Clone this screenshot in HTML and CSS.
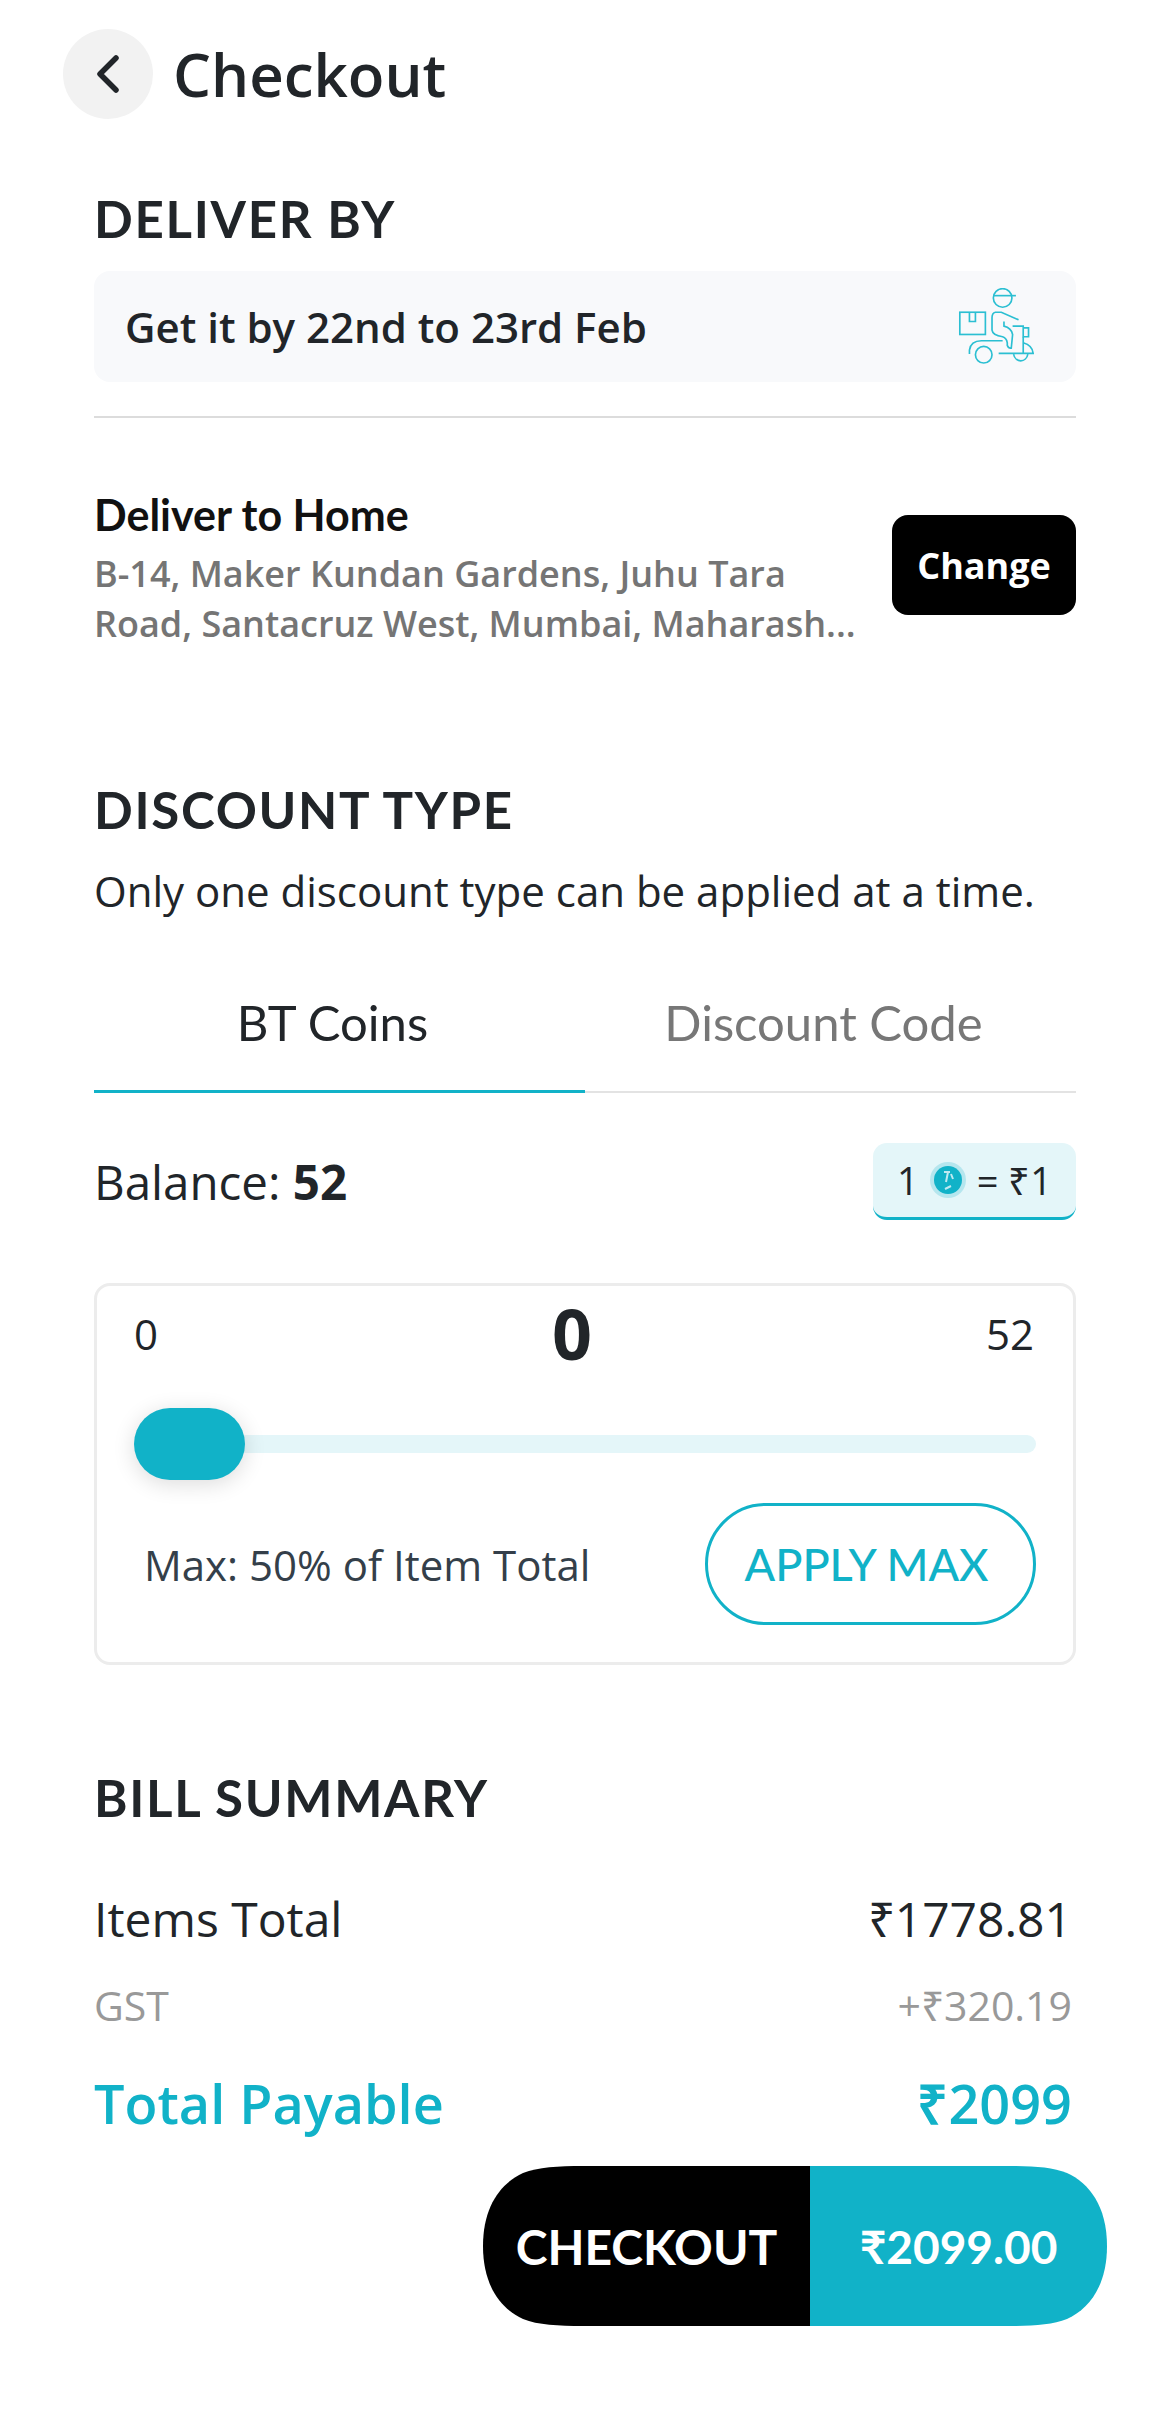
FILE: index.html
```html
<!DOCTYPE html>
<html lang="en">
<head>
    <meta charset="UTF-8">
    <meta name="viewport" content="width=device-width, initial-scale=1.0">
    <title>Checkout</title>
    <link rel="stylesheet" href="styles.css">
</head>
<body>
    <div class="page">
        <div class="header">
            <div class="back">
                <svg width="22" height="38" viewBox="0 0 22 38"><path d="M19 3 L3 19 L19 35" fill="none" stroke="#212529" stroke-width="5.5" stroke-linecap="round" stroke-linejoin="round"/></svg>
            </div>
            <h1>Checkout</h1>
        </div>

        <h2 class="section-title first">DELIVER BY</h2>
        <div class="deliver-box">
            <span>Get it by 22nd to 23rd Feb</span>
            <svg class="scooter" width="80" height="78" viewBox="170 85 240 235" fill="none" stroke="#2bbfd2" stroke-width="5">
                <rect x="181" y="158" width="77" height="67"/>
                <path d="M210 158 V186 H228 V158"/>
                <circle cx="310" cy="115" r="28"/>
                <path d="M283 108 H350"/>
                <path d="M358 181 L306 158 H288 Q278 160 278 175 V212 Q280 228 310 232 Q322 236 324 250 V258 Q328 268 336 266 L340 225 Q336 205 314 200 V186"/>
                <path d="M340 200 H372 V232 H388 V205 H372"/>
                <path d="M372 232 V282"/>
                <path d="M210 284 V272 Q214 244 246 244 H310"/>
                <path d="M298 282 H402 Q400 258 372 250"/>
                <circle cx="253" cy="286" r="25"/>
                <path d="M343 284 A22 26 0 0 0 386 284"/>
            </svg>
        </div>
        <div class="divider"></div>

        <div class="address">
            <div class="address-text">
                <div class="address-title">Deliver to Home</div>
                <div class="address-line">B-14, Maker Kundan Gardens, Juhu Tara</div>
                <div class="address-line">Road, Santacruz West, Mumbai, Maharash...</div>
            </div>
            <button class="change-btn">Change</button>
        </div>

        <h2 class="section-title discount">DISCOUNT TYPE</h2>
        <p class="discount-note">Only one discount type can be applied at a time.</p>

        <div class="tabs">
            <div class="tab active">BT Coins</div>
            <div class="tab">Discount Code</div>
        </div>

        <div class="balance-row">
            <div class="balance">Balance: <strong>52</strong></div>
            <div class="rate-chip">
                <span>1</span>
                <svg width="36" height="36" viewBox="0 0 36 36">
                    <circle cx="18" cy="18" r="18" fill="#b5e6ee"/>
                    <circle cx="18" cy="18" r="14" fill="#11b2c8"/>
                    <path d="M14 10 H20 M18 10 L16 20 M21 12 L23 17 M15 27 L21 24" stroke="#bfeaf1" stroke-width="2" fill="none"/>
                </svg>
                <span>= ₹1</span>
            </div>
        </div>

        <div class="coin-card">
            <div class="range-labels">
                <span>0</span>
                <span class="range-value">0</span>
                <span class="range-max">52</span>
            </div>
            <div class="slider">
                <div class="thumb"></div>
            </div>
            <div class="card-foot">
                <span class="max-note">Max: 50% of Item Total</span>
                <button class="apply-btn">APPLY MAX</button>
            </div>
        </div>

        <h2 class="section-title bill">BILL SUMMARY</h2>
        <div class="bill-row items"><span>Items Total</span><span>₹1778.81</span></div>
        <div class="bill-row gst"><span>GST</span><span>+₹320.19</span></div>
        <div class="bill-row total"><span>Total Payable</span><span>₹2099</span></div>
    </div>

    <div class="checkout-btn">
        <div class="checkout-label">CHECKOUT</div>
        <div class="checkout-price">₹2099.00</div>
    </div>
</body>
</html>
```
FILE: styles.css
```css
body {
    margin: 0;
    background: white;
    font-family: 'Open Sans', sans-serif;
    color: #212529;
}
.page {
    padding: 29px 94px 0;
    height: 2390px;
}
.header {
    display: flex;
    align-items: center;
    margin-left: -31px;
    gap: 20px;
}
.back {
    width: 90px;
    height: 90px;
    border-radius: 50%;
    background: #f2f2f2;
    display: flex;
    align-items: center;
    justify-content: center;
}
h1 {
    margin: 0;
    font-size: 60px;
    font-weight: 600;
    line-height: 90px;
}
.section-title {
    margin: 0;
    font-family: 'Lato', sans-serif;
    font-size: 51px;
    font-weight: 700;
    letter-spacing: 1.7px;
    line-height: 60px;
    color: #212529;
}
.first {
    margin-top: 70px;
}
.deliver-box {
    margin-top: 22px;
    height: 111px;
    background: #f8f9fb;
    border-radius: 16px;
    display: flex;
    align-items: center;
    justify-content: space-between;
    padding: 0 40px 0 31px;
    font-size: 42px;
    font-weight: 600;
}
.divider {
    height: 2px;
    background: #dcdcdc;
    margin-top: 34px;
}
.address {
    display: flex;
    align-items: center;
    justify-content: space-between;
    margin-top: 63px;
}
.address-title {
    font-family: 'Lato', sans-serif;
    font-size: 43px;
    font-weight: 700;
    line-height: 68px;
    color: #111;
}
.address-line {
    font-size: 36px;
    font-weight: 600;
    line-height: 50px;
    color: #757575;
}
.change-btn {
    width: 184px;
    height: 100px;
    border: none;
    border-radius: 16px;
    background: black;
    color: white;
    font-family: 'Open Sans', sans-serif;
    font-size: 36px;
    font-weight: 700;
}
.discount {
    margin-top: 131px;
}
.discount-note {
    margin: 24px 0 0;
    font-size: 42px;
    line-height: 54px;
}
.tabs {
    display: flex;
    margin-top: 73px;
    border-bottom: 2px solid #e3e3e3;
}
.tab {
    flex: 1 1 0;
    box-sizing: border-box;
    text-align: center;
    font-family: 'Lato', sans-serif;
    font-size: 49px;
    line-height: 62px;
    padding: 0 14px 37px 0;
    margin-bottom: -2px;
    color: #777;
    border-bottom: 3px solid transparent;
}
.tab.active {
    color: #212529;
    border-bottom-color: #11b2c8;
}
.balance-row {
    display: flex;
    align-items: center;
    justify-content: space-between;
    margin-top: 50px;
}
.balance {
    font-size: 47.5px;
}
.rate-chip {
    width: 203px;
    height: 77px;
    box-sizing: border-box;
    background: #e4f6f9;
    border-bottom: 3px solid #11b2c8;
    border-radius: 14px;
    display: flex;
    align-items: center;
    justify-content: center;
    gap: 11px;
    font-size: 38px;
}
.coin-card {
    margin-top: 63px;
    height: 382px;
    box-sizing: border-box;
    border: 3px solid #ececec;
    border-radius: 16px;
    padding: 14px 37px 0 37px;
}
.range-labels {
    display: flex;
    align-items: center;
    justify-content: space-between;
    font-size: 42px;
    height: 66px;
}
.range-value {
    font-size: 70px;
    font-weight: 700;
}
.range-max {
    margin-right: 2px;
}
.slider {
    position: relative;
    margin-top: 69px;
    height: 18px;
    background: #e4f6f9;
    border-radius: 9px;
}
.thumb {
    position: absolute;
    left: 0;
    top: -27px;
    width: 111px;
    height: 72px;
    border-radius: 36px;
    background: #11b2c8;
    box-shadow: 0 4px 22px rgba(0, 0, 0, 0.14);
}
.card-foot {
    display: flex;
    align-items: center;
    justify-content: space-between;
    margin-top: 50px;
}
.max-note {
    font-size: 42px;
    margin-left: 10px;
    color: #343f4a;
}
.apply-btn {
    width: 331px;
    height: 122px;
    background: white;
    border: 3px solid #11b2c8;
    border-radius: 61px;
    color: #11b2c8;
    font-family: 'Lato', sans-serif;
    font-size: 45px;
    font-weight: 500;
    padding: 0 8px 0 0;
}
.bill {
    margin-top: 103px;
}
.bill-row {
    display: flex;
    justify-content: space-between;
    padding-right: 4px;
}
.items {
    margin-top: 59px;
    font-size: 48px;
    line-height: 64px;
}
.gst {
    margin-top: 28px;
    font-size: 41px;
    line-height: 52px;
    color: #999;
}
.total {
    margin-top: 37px;
    font-size: 54px;
    line-height: 70px;
    font-weight: 600;
    color: #11b2c8;
}
.checkout-btn {
    position: absolute;
    left: 483px;
    top: 2166px;
    width: 624px;
    height: 160px;
    display: flex;
    clip-path: path("M0 80 C0 40 18 17 40 7 C55 1 75 0 100 0 H524 C549 0 569 1 584 7 C606 17 624 40 624 80 C624 120 606 143 584 153 C569 159 549 160 524 160 H100 C75 160 55 159 40 153 C18 143 0 120 0 80 Z");
    font-family: 'Lato', sans-serif;
    font-size: 48px;
    font-weight: 700;
    color: white;
}
.checkout-label {
    width: 327px;
    background: black;
    display: flex;
    align-items: center;
    justify-content: center;
}
.checkout-price {
    flex: 1;
    font-size: 46px;
    background: #11b2c8;
    display: flex;
    align-items: center;
    justify-content: center;
}
```
